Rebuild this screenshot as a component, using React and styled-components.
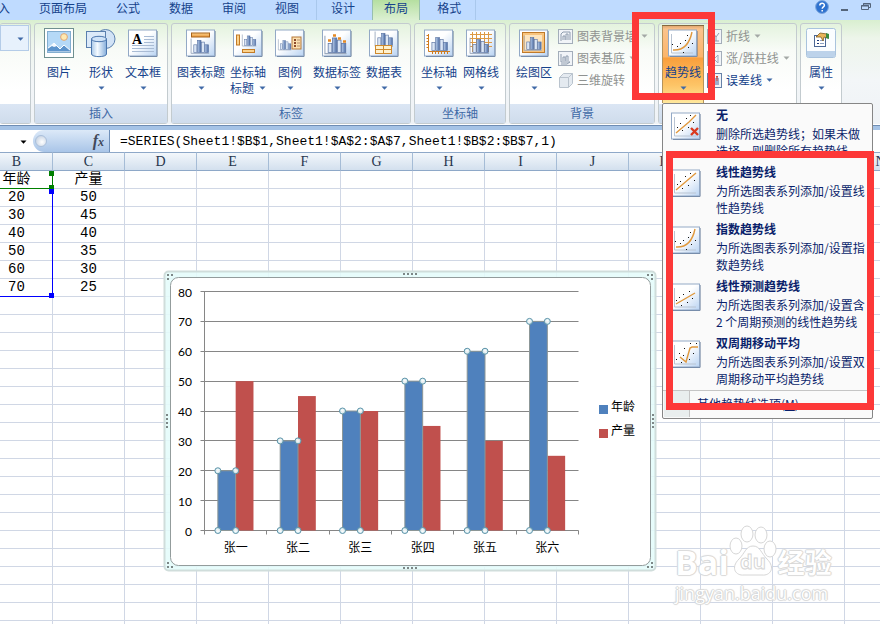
import { useState } from 'react';
import styled, { createGlobalStyle, css } from 'styled-components';

const GlobalStyle = createGlobalStyle`
  * { box-sizing: border-box; }
  body {
    margin: 0;
    font-family: "Noto Sans CJK SC", sans-serif;
    font-size: 12px;
    color: #15428b;
    overflow: hidden;
  }
  button, input { font: inherit; color: inherit; border: 0; padding: 0; background: none; }
`;

const uiFont = '"Noto Sans CJK SC", sans-serif';
const cellFont = '"Liberation Mono", "Noto Sans CJK SC", monospace';

//layout of the window
const Page = styled.main`
  position: relative;
  display: flex;
  flex-direction: column;
  height: 100vh;
  overflow: hidden;
  background: #fff;
`;

const TabBar = styled.nav`
  display: flex;
  height: 20px;
  background: #bfdbff;
`;

const TabList = styled.div`
  display: flex;
  gap: 1px;
  margin-left: -28px;
`;

const ContextTabs = styled.div`
  display: flex;
  gap: 1px;
  margin-left: 3px;
  border-left: 1px solid #a9c8ec;
  border-right: 1px solid #a9c8ec;
`;

const Tab = styled.button`
  height: 20px;
  padding: 0 14px 4px;
  line-height: 16px;
  white-space: nowrap;
  ${(props) => props.$active && css`
    margin: 0 3px;
    padding: 0 11px 4px;
    background: linear-gradient(#b5dfa0, #dcf0d2);
    box-shadow: -1px 0 #98bfae, 1px 0 #98bfae;
  `}
`;

const WindowButtons = styled.div`
  display: flex;
  align-items: flex-start;
  gap: 12px;
  margin-left: auto;
  padding-right: 9px;
`;

const IconButton = styled.button`
  height: 15px;
  line-height: 0;
`;

const Ribbon = styled.section`
  position: relative;
  z-index: 2;
  display: grid;
  grid-template-columns: 31px 134px 240px 92px 146px 139px 42px;
  gap: 3px;
  height: 110px;
  padding: 3px 0 6px;
  background: linear-gradient(#d9efd0, #edf5ea 18px, #f3f6f8 60px, #eef2f6);
  border-bottom: 4px solid #a5c3e6;
  box-shadow: inset 0 -1px #6e8db4, inset 0 -2px #fff;
`;

const Group = styled.section`
  display: flex;
  flex-direction: column;
  justify-content: space-between;
  height: 101px;
  border: 1px solid #c3cbcf;
  border-left-width: ${(props) => (props.$cut ? 0 : '1px')};
  border-radius: 3px;
  background: linear-gradient(#e4f3de, #f8fbf7 26px, #fff 66px);
`;

const GroupTools = styled.div`
  display: flex;
  height: 79px;
  padding: 1px 3px 0;
`;

const GroupTitle = styled.h2`
  height: 19px;
  margin: 0;
  font-size: 12px;
  font-weight: 400;
  line-height: 18px;
  text-align: center;
  color: #3f69a6;
  background: linear-gradient(#dbe6f4, #cfdcec);
`;

const StyleBox = styled.button`
  width: 30px;
  height: 26px;
  padding: 0 4px 0 16px;
  margin-left: -3px;
  line-height: 0;
  border: 1px solid #b4cce8;
  background: #e7f1fc;
`;

const BigTool = styled.button`
  display: flex;
  flex: none;
  flex-direction: column;
  align-items: center;
  width: ${(props) => props.$width || 42}px;
  height: 78px;
  padding-top: 3px;
  line-height: 16px;
  white-space: nowrap;
  ${(props) => props.$pressed && css`
    background: linear-gradient(#d9a06a, #fbc38c 4px, #fbb56a 32px, #fa9f3c 33px, #fdc466 60px, #ffe79c);
    box-shadow: inset 0 1px #85693f, inset 1px 0 #b5935c, inset -1px 0 #b5935c;
  `}
  & > svg { margin-bottom: 6px; flex: none; }
`;

const ToolLine = styled.span`
  display: flex;
  align-items: center;
  justify-content: center;
  gap: 5px;
  height: 16px;
`;

const SmallTools = styled.div`
  display: flex;
  flex-direction: column;
  padding-left: 3px;
`;

const SmallTool = styled.button`
  display: flex;
  align-items: center;
  gap: 4px;
  height: 22px;
  line-height: 16px;
  white-space: nowrap;
  color: ${(props) => (props.disabled ? '#8f9290' : '#15428b')};
`;

//trendline menu
const MenuAnchor = styled.div`
  position: relative;
`;

const Menu = styled.div`
  position: absolute;
  top: 78px;
  left: 0;
  width: 211px;
  border: 1px solid #868686;
  border-radius: 2px;
  background: #fafafa;
  color: #0a1f6b;
`;

const MenuItem = styled.button`
  display: grid;
  grid-template-columns: 30px 152px;
  column-gap: 15px;
  width: 100%;
  height: 57px;
  padding: 1px 4px 2px 8px;
  text-align: left;
  & > svg { margin-top: 6px; }
`;

const MenuName = styled.strong`
  display: block;
  line-height: 20px;
`;

const MenuText = styled.span`
  display: block;
  line-height: 17px;
`;

const MenuFooter = styled.button`
  display: flex;
  width: 100%;
  height: 28px;
  margin-top: 1px;
  padding: 0 1px 1px;
  border-top: 1px solid #c5c5c5;
  line-height: 26px;
  text-align: left;
  &::before {
    content: '';
    width: 25px;
    margin-right: 7px;
    background: #e9eeee;
    border-right: 1px solid #c5c5c5;
  }
`;

//formula bar
const FormulaBar = styled.div`
  display: grid;
  grid-template-columns: 33px 77px 1fr;
  height: 22px;
  background: #fff;
`;

const NameBox = styled.button`
  padding-right: 6px;
  text-align: right;
  line-height: 0;
`;

const FunctionButton = styled.button`
  display: flex;
  align-items: center;
  justify-content: space-between;
  padding: 0 5px 0 2px;
  border-radius: 11px 0 0 11px;
  border-right: 1px solid #6f8fb8;
  background: linear-gradient(#dce9f8, #a9c5e8);
  font: italic bold 16px "Liberation Serif", serif;
  color: #40485a;
  small { font-size: 12px; }
`;

const Knob = styled.span`
  width: 12px;
  height: 12px;
  border-radius: 50%;
  background: radial-gradient(circle at 60% 60%, #fff, #b9c8dc);
  border: 1px solid #aabfda;
`;

const FormulaInput = styled.input`
  min-width: 0;
  padding-left: 10px;
  font: 13px ${cellFont};
  color: #000;
  outline: none;
`;

//sheet
const Sheet = styled.section`
  position: relative;
  flex: 1;
  min-height: 0;
  overflow: hidden;
`;

const Cells = styled.table`
  table-layout: fixed;
  width: 936px;
  margin-left: -19px;
  border-collapse: separate;
  border-spacing: 0;
  font: 14px ${cellFont};
  color: #000;
`;

const HeadCell = styled.th`
  height: 19px;
  padding: 0;
  border: solid #8ea8c8;
  border-width: 1px 1px 1px 0;
  border-right-color: #a5bcd6;
  background: linear-gradient(#f3f7fb, #d3e0ee);
  font: 14px/16px "Liberation Serif", serif;
  color: #27364d;
`;

const Cell = styled.td`
  height: 18px;
  padding: 0;
  border: solid #d0d7e5;
  border-width: 0 1px 1px 0;
  line-height: 17px;
  text-align: center;
`;

const Range = styled.div`
  position: absolute;
  top: ${(props) => props.$top}px;
  left: -20px;
  width: 73px;
  height: ${(props) => props.$height}px;
  border: solid ${(props) => props.$color};
  border-width: 0 1px 1px 0;
  &::before, &::after {
    content: '';
    position: absolute;
    right: -2px;
    width: 5px;
    height: 5px;
    background: ${(props) => props.$color};
  }
  &::before { top: 0; }
  &::after { bottom: -2px; }
`;

const ChartObject = styled.figure`
  position: absolute;
  top: 118px;
  left: 163px;
  margin: 0;
  line-height: 0;
`;

const Highlight = styled.div`
  position: absolute;
  z-index: 3;
  top: ${(props) => props.$top}px;
  left: ${(props) => props.$left}px;
  width: ${(props) => props.$width}px;
  height: ${(props) => props.$height}px;
  border: 7px solid #fd3838;
  pointer-events: none;
`;

const Watermark = styled.div`
  position: absolute;
  left: 675px;
  top: 375px;
  color: #fff;
  font-family: "Open Sans", "Noto Sans CJK SC", sans-serif;
  text-shadow: 0 0 1px #bbb, 1px 0 1px #ddd, -1px 0 1px #ddd, 0 1px 1px #ddd, 0 -1px 1px #ddd;
`;

const WatermarkLogo = styled.div`
  display: flex;
  align-items: flex-end;
  height: 54px;
  font-size: 34px;
  font-weight: 700;
  line-height: 38px;
  svg { flex: none; margin-bottom: 4px; text-shadow: none; }
`;

const WatermarkName = styled.span`
  margin-left: 1px;
  font: 700 27px/38px ${uiFont};
`;

const WatermarkSite = styled.div`
  font-size: 18px;
  line-height: 24px;
`;

//small drawings
const Arrow = ({ color = '#3f69a6' }) => (
    <svg width="7" height="4" viewBox="0 0 7 4"><path d="M0.5 0.5h6L3.5 3.7z" fill={color} /></svg>
);

const Defs = () => (
    <svg width="0" height="0" style={{ position: 'absolute' }}>
        <defs>
            <linearGradient id="paper" x1="0" y1="0" x2="1" y2="1">
                <stop offset="0.45" stopColor="#fff" />
                <stop offset="1" stopColor="#b9d3f2" />
            </linearGradient>
            <linearGradient id="bar" x1="0" x2="1">
                <stop offset="0" stopColor="#b9cdea" />
                <stop offset="1" stopColor="#4a6ba4" />
            </linearGradient>
            <linearGradient id="can" x1="0" x2="1">
                <stop offset="0" stopColor="#a9c8e8" />
                <stop offset="0.4" stopColor="#f4faff" />
                <stop offset="1" stopColor="#86aedb" />
            </linearGradient>
            <linearGradient id="gold" x1="0" y1="0" x2="0" y2="1">
                <stop offset="0" stopColor="#fbd28c" />
                <stop offset="1" stopColor="#e9963a" />
            </linearGradient>
            <radialGradient id="handle">
                <stop offset="0.2" stopColor="#fff" stopOpacity="0.9" />
                <stop offset="1" stopColor="#c8e6ee" stopOpacity="0.9" />
            </radialGradient>
        </defs>
    </svg>
);

const Paper = ({ children }) => (
    <svg width="30" height="30" viewBox="0 0 30 30">
        <path d="M2 28.5h27V3" fill="none" stroke="#5b7090" />
        <rect x="0.5" y="2" width="28" height="26" fill="url(#paper)" stroke="#93a9c6" />
        {children}
    </svg>
);

//bars with an axis, shared by most of the chart icons
const Bars = ({ x = 6, y = 23, s = 1, axis = true }) => (
    <g transform={`translate(${x} ${y}) scale(${s})`} stroke="#5b74a3" strokeWidth="0.7">
        {axis && <path d="M-1-15V1.5H19" fill="none" stroke="#9aa8bd" strokeWidth="1" />}
        <rect x="2" y="-8" width="3.4" height="8.5" fill="#dbe6f5" />
        <rect x="6" y="-13" width="4" height="13.5" fill="url(#bar)" />
        <rect x="10.5" y="-11" width="3.4" height="11.5" fill="#dbe6f5" />
        <rect x="14.3" y="-8" width="4" height="8.5" fill="url(#bar)" />
    </g>
);

const PictureIcon = () => (
    <svg width="30" height="30" viewBox="0 0 30 30">
        <rect x="0.5" y="0.5" width="29" height="29" fill="#fff" stroke="#6f9090" />
        <rect x="3" y="3" width="24" height="21" fill="#b5d9f7" />
        <circle cx="20" cy="9" r="3.4" fill="#ffe9b0" stroke="#dca77a" />
        <path d="M3 24v-3l7-6 6 6 4-4 7 6v1z" fill="#5d94cc" stroke="#fff" />
        <path d="M3 21l7-6 3 3-3 1-2-1z" fill="#f5faff" />
        <rect x="3.5" y="3.5" width="23" height="21" fill="none" stroke="#83aed0" />
    </svg>
);

const ShapesIcon = () => (
    <svg width="30" height="30" viewBox="0 0 30 30">
        <circle cx="19.5" cy="11" r="9.5" fill="#d2e3f6" stroke="#5a7fae" />
        <rect x="0.5" y="3.5" width="19" height="16" fill="#dceaf9" stroke="#5a7fae" />
        <path d="M5.5 11v15c0 3.5 15 3.5 15 0V11z" fill="url(#can)" stroke="#4b76ad" />
        <ellipse cx="13" cy="11" rx="7.5" ry="2.7" fill="#cfe3f8" stroke="#4b76ad" />
    </svg>
);

const TextBoxIcon = () => (
    <Paper>
        <path d="M16 8.5h10M16 11.5h10M16 14.5h10M4 17.500h22M4 20.500h22M4 23.500h22" stroke="#a9bbd4" />
        <text x="4" y="16" fontFamily="Liberation Serif" fontWeight="700" fontSize="14" fill="#000">A</text>
    </Paper>
);

const TitleIcon = () => (
    <Paper>
        <rect x="5.5" y="5" width="18" height="4" fill="url(#gold)" stroke="#a8631a" />
        <Bars x={6} y={24} s={0.9} />
    </Paper>
);

const AxisTitleIcon = () => (
    <Paper>
        <rect x="3.5" y="7" width="3" height="10" fill="#fbd28c" stroke="#c37b25" />
        <Bars x={10} y={17} s={0.7} />
        <rect x="9.5" y="21.5" width="12" height="3" fill="#fbd28c" stroke="#c37b25" />
    </Paper>
);

const LegendIcon = () => (
    <Paper>
        <Bars x={4} y={21} s={0.65} />
        <rect x="17" y="9" width="9" height="12" fill="#fce0b0" stroke="#b6793a" />
        <path d="M19 12h2M19 15h2M19 18h2" stroke="#8c4a2b" strokeWidth="2" />
        <path d="M22 12h3M22 15h3M22 18h3" stroke="#b58d6a" />
    </Paper>
);

const DataLabelIcon = () => (
    <Paper>
        <Bars x={4} y={24} s={1.08} />
        <path d="M6 12.5h3M11 7.5h3M16 10.5h3M21 13.5h3" stroke="#e58a25" strokeWidth="2.5" />
    </Paper>
);

const DataTableIcon = () => (
    <Paper>
        <Bars x={7} y={17} s={0.9} />
        <rect x="6.5" y="17.5" width="16" height="8" fill="#fff2cf" stroke="#cf8a2d" />
        <path d="M6 21.5h17M14.5 17v9" stroke="#cf8a2d" />
    </Paper>
);

const AxesIcon = () => (
    <Paper>
        <Bars x={6} y={22} s={0.95} axis={false} />
        <path d="M4.5 6v17.5H26M2.5 7.5h2M2.5 10.5h2M2.5 13.5h2M2.5 16.5h2M2.5 19.5h2M8.5 23v3M11.5 23v3M14.5 23v3M17.5 23v3M20.5 23v3M23.5 23v3" fill="none" stroke="#d07c1e" />
    </Paper>
);

const GridIcon = () => (
    <Paper>
        <path d="M4 6.5h22M4 10.5h22M4 14.5h22M4 18.5h22M6.5 4v20M10.5 4v20M14.5 4v20M18.5 4v20M22.5 4v20" stroke="#dd9a45" />
        <Bars x={5} y={24} s={0.95} />
    </Paper>
);

const PlotAreaIcon = () => (
    <Paper>
        <rect x="3.5" y="4.5" width="22" height="20" fill="#f8c47e" stroke="#c07a2a" />
        <rect x="6" y="7" width="17" height="15" fill="#fde5c0" />
        <Bars x={6} y={21} s={0.88} />
    </Paper>
);

const PropertiesIcon = () => (
    <svg width="30" height="30" viewBox="0 0 30 30">
        <rect x="0.5" y="0.5" width="29" height="29" rx="2" fill="#fafdff" stroke="#a9c3dd" />
        <path d="M1 23h28v5a1 1 0 0 1-1 1H2a1 1 0 0 1-1-1z" fill="#bdd3ea" />
        <rect x="8.5" y="7.5" width="11" height="11" fill="#fff" stroke="#4a6796" />
        <path d="M11 12.5h2M11 15.5h2" stroke="#1d3b78" />
        <path d="M14 12.5h4M14 15.5h4" stroke="#8ba0c2" />
        <path d="M10 9l4-4 7 1 1 4-4-1-1 4-2-4z" fill="#e9b45a" stroke="#7d5a22" strokeWidth="0.8" />
        <path d="M20 5l3 1v5l-3-1z" fill="#3b8a3f" />
    </svg>
);

const trendPaths = {
    none: 'M5 22L18 11l7-7',
    linear: 'M5 22L25 5',
    exponential: 'M5 22Q20 23 24 4',
    forecast: 'M5 22L24 11',
    moving: 'M9 18l6 5 4-14 2-1h6',
};

const trendDots = {
    none: [[6, 16], [9, 12], [11, 19], [15, 7], [17, 16], [22, 11], [19, 4]],
    linear: [[6, 16], [9, 13], [11, 20], [14, 8], [17, 17], [19, 5], [23, 12]],
    exponential: [[4, 16], [9, 18], [12, 15], [15, 24], [20, 19], [17, 12], [24, 15], [19, 7]],
    forecast: [[5, 18], [8, 15], [10, 23], [12, 12], [16, 20], [18, 9], [21, 16]],
    moving: [[5, 20], [8, 14], [10, 23], [12, 16], [13, 9], [18, 20], [22, 14], [19, 4], [25, 4]],
};

const TrendIcon = ({ kind }) => (
    <Paper>
        <path d="M3.5 6v19H25" fill="none" stroke="#b9c4d2" />
        <path d={trendPaths[kind]} fill="none" stroke="#e0983c" strokeWidth="1.4" />
        {trendDots[kind].map(([x, y]) => <rect key={`${x}-${y}`} x={x} y={y} width="1" height="1" fill="#111" />)}
        {kind === 'none' && <path d="M20 17l7 7M27 17l-7 7" stroke="#da3a20" strokeWidth="2.4" />}
    </Paper>
);

const SmallIcon = ({ kind }) => (
    <svg width="15" height="15" viewBox="0 0 15 15">
        {kind === 'rotate' ? (
            <g fill="#e4eaf0" stroke="#b9c3cd">
                <path d="M1.5 4.5l4-4h9v10l-4 4h-9z" />
                <path d="M1.5 4.5h9v10M10.5 4.5l4-4" fill="none" />
            </g>
        ) : (
            <>
                <rect x="0.5" y="0.5" width="14" height="14" fill="#f1f4f8" stroke={kind === 'error' ? '#6782a8' : '#a3adba'} />
                {kind === 'wall' && <path d="M3 12V5l2-2h7v8M5 11V7h2v4M8 11V5h2v6" fill="none" stroke="#8e9cae" />}
                {kind === 'floor' && <path d="M3 3v8h9l-3 2H3M5 10V6h2v4M8 10V5h2v5" fill="none" stroke="#8e9cae" />}
                {kind === 'lines' && <path d="M3 3v9h9M5 9l2-4 2 3 3-4M9 8v4" fill="none" stroke="#8e9cae" />}
                {kind === 'updown' && <path d="M3 12V4l4 4 4-4v8L7 8z" fill="none" stroke="#9dabc0" />}
                {kind === 'error' && <path d="M5 12V7h2v5M9 12V5h2v7" fill="none" stroke="#4c67a0" />}
                {kind === 'error' && <path d="M6 3v5M10 3v5M5 3.5h2M9 3.5h2" stroke="#d24a30" />}
            </>
        )}
    </svg>
);

const Tool = ({ icon, label, second, arrow = true, width, pressed, onClick }) => (
    <BigTool $width={width} $pressed={pressed} onClick={onClick}>
        {icon}
        <ToolLine>{label}</ToolLine>
        <ToolLine>{second}{arrow && <Arrow />}</ToolLine>
    </BigTool>
);

const Small = ({ kind, label, arrow = true, disabled }) => (
    <SmallTool disabled={disabled}>
        <SmallIcon kind={kind} />
        {label}
        {arrow && <Arrow color={disabled ? '#a3a8a5' : '#3f69a6'} />}
    </SmallTool>
);

const trendOptions = [
    { kind: 'none', name: '无', text: '删除所选趋势线；如果未做选择，则删除所有趋势线' },
    { kind: 'linear', name: '线性趋势线', text: '为所选图表系列添加/设置线性趋势线' },
    { kind: 'exponential', name: '指数趋势线', text: '为所选图表系列添加/设置指数趋势线' },
    { kind: 'forecast', name: '线性预测趋势线', text: '为所选图表系列添加/设置含 2 个周期预测的线性趋势线' },
    { kind: 'moving', name: '双周期移动平均', text: '为所选图表系列添加/设置双周期移动平均趋势线' },
];

const people = ['张一', '张二', '张三', '张四', '张五', '张六'];
const ages = [20, 30, 40, 50, 60, 70];
const yields = [50, 45, 40, 35, 30, 25];
const columns = 'BCDEFGHIJKLMN'.split('');

const cellValue = (row, col) => {
    if (col > 1) return '';
    if (row === 0) return ['年龄', '产量'][col];
    return [ages, yields][col][row - 1];
};

//plot area of the chart, value 0 lies on the base line
const plot = { left: 41.5, right: 415.5, top: 21.5, base: 260.5 };
const step = (plot.right - plot.left) / 6;
const barWidth = step / 3.5;
const valueY = (v) => plot.base - (v * (plot.base - plot.top)) / 80;

const Dots = ({ x, y, dx = 0, dy = 0, count = 4 }) => (
    Array.from({ length: count }, (_, i) => (
        <rect key={i} x={x + i * dx} y={y + i * dy} width="2" height="2" fill="#7d8787" />
    ))
);

const Chart = () => (
    <svg width="494" height="302" viewBox="0 0 494 302" role="img" aria-label="年龄 产量">
        <rect x="1.5" y="1.5" width="491" height="299" rx="4" fill="#e4fcfb" fillOpacity="0.88" stroke="#d0dddb" strokeWidth="2" />
        <rect x="7.5" y="7.5" width="480" height="288" rx="8" fill="#fff" stroke="#939c9c" />
        <Dots x={240} y={3} dx={4} />
        <Dots x={240} y={297} dx={4} />
        <Dots x={3} y={144} dy={4} />
        <Dots x={489} y={144} dy={4} />
        {[[4, 4], [8, 4], [4, 8], [484, 4], [488, 4], [488, 8], [4, 292], [4, 296], [8, 296], [488, 292], [484, 296], [488, 296]].map(([x, y]) => (
            <rect key={`${x}-${y}`} x={x} y={y} width="2" height="2" fill="#7d8787" />
        ))}
        {[0, 10, 20, 30, 40, 50, 60, 70, 80].map((v) => (
            <g key={v}>
                <path d={`M${plot.left - 4} ${Math.floor(valueY(v)) + 0.5}H${plot.right}`} stroke="#868686" />
                <text x="29" y={valueY(v) + 5} textAnchor="end" fontFamily="Lato" fontSize="12" fill="#000">{v}</text>
            </g>
        ))}
        <path d={`M${plot.left} ${plot.top}V${plot.base + 4}`} stroke="#868686" />
        {people.map((name, i) => {
            const x = plot.left + step * i + barWidth * 0.75;
            return (
                <g key={name}>
                    <path d={`M${Math.floor(plot.left + step * (i + 1)) + 0.5} ${plot.base}v4`} stroke="#868686" />
                    <rect x={x + barWidth} y={valueY(yields[i])} width={barWidth} height={plot.base - valueY(yields[i])} fill="#c0504d" />
                    <rect x={x} y={valueY(ages[i])} width={barWidth} height={plot.base - valueY(ages[i])} fill="#4f81bd" stroke="#8c9696" />
                    {[[x, valueY(ages[i])], [x + barWidth, valueY(ages[i])], [x, plot.base], [x + barWidth, plot.base]].map(([cx, cy], n) => (
                        <circle key={n} cx={cx} cy={cy} r="3" fill="url(#handle)" stroke="#5d93a8" />
                    ))}
                    <text x={plot.left + step * (i + 0.5)} y="282" textAnchor="middle" fontFamily={uiFont} fontSize="12" fill="#000">{name}</text>
                </g>
            );
        })}
        <rect x="436" y="135" width="9" height="9" fill="#4f81bd" />
        <text x="448" y="141" fontFamily={uiFont} fontSize="12" fill="#000">年龄</text>
        <rect x="436" y="159" width="9" height="9" fill="#c0504d" />
        <text x="448" y="165" fontFamily={uiFont} fontSize="12" fill="#000">产量</text>
    </svg>
);

const PawLogo = () => (
    <svg width="48" height="52" viewBox="0 0 48 52" fill="#fff" stroke="#d6d6d6">
        <ellipse cx="7" cy="21" rx="6" ry="8" />
        <ellipse cx="18" cy="9" rx="6" ry="8" />
        <ellipse cx="32" cy="10" rx="6" ry="8" />
        <ellipse cx="41" cy="24" rx="6" ry="8" />
        <path d="M24 21c-7 0-8 7-14 13-9 9-3 17 5 16h18c8 1 14-7 5-16-6-6-7-13-14-13z" />
        <text x="24" y="44" textAnchor="middle" fontFamily="Open Sans" fontWeight="700" fontSize="20">du</text>
    </svg>
);

const App = () => {
    const [tab, setTab] = useState('布局');
    const [menuOpen, setMenuOpen] = useState(true);
    const [formula, setFormula] = useState('=SERIES(Sheet1!$B$1,Sheet1!$A$2:$A$7,Sheet1!$B$2:$B$7,1)');

    const renderTab = (name) => (
        <Tab key={name} $active={tab === name} onClick={() => setTab(name)}>{name}</Tab>
    );

    return (
        <Page>
            <GlobalStyle />
            <Defs />
            <TabBar>
                <TabList>{['插入', '页面布局', '公式', '数据', '审阅', '视图'].map(renderTab)}</TabList>
                <ContextTabs>{['设计', '布局', '格式'].map(renderTab)}</ContextTabs>
                <WindowButtons>
                    <IconButton aria-label="帮助">
                        <svg width="14" height="15" viewBox="0 0 14 15">
                            <circle cx="7" cy="7" r="6.4" fill="#2f72cf" stroke="#7ba5dc" />
                            <path d="M4.8 5.5c0-3 4.6-3 4.6-.2 0 1.7-2.2 1.6-2.2 3.5M7.2 10v1.6" fill="none" stroke="#fff" strokeWidth="1.5" />
                        </svg>
                    </IconButton>
                    <IconButton aria-label="最小化">
                        <svg width="8" height="15" viewBox="0 0 8 15"><path d="M0 10h7" stroke="#55657a" strokeWidth="2" /></svg>
                    </IconButton>
                    <IconButton aria-label="还原">
                        <svg width="10" height="15" viewBox="0 0 10 15"><path d="M2.5 5V3.5h7v4H8M0.5 5.5h7v4h-7zM2 4h7M0 6h8" fill="none" stroke="#55657a" /></svg>
                    </IconButton>
                </WindowButtons>
            </TabBar>
            <Ribbon>
                <Group $cut>
                    <GroupTools><StyleBox aria-label="图表元素"><Arrow /></StyleBox></GroupTools>
                    <GroupTitle />
                </Group>
                <Group>
                    <GroupTools>
                        <Tool icon={<PictureIcon />} label="图片" arrow={false} />
                        <Tool icon={<ShapesIcon />} label="形状" />
                        <Tool icon={<TextBoxIcon />} label="文本框" />
                    </GroupTools>
                    <GroupTitle>插入</GroupTitle>
                </Group>
                <Group>
                    <GroupTools>
                        <Tool icon={<TitleIcon />} label="图表标题" width={52} />
                        <Tool icon={<AxisTitleIcon />} label="坐标轴" second="标题" />
                        <Tool icon={<LegendIcon />} label="图例" />
                        <Tool icon={<DataLabelIcon />} label="数据标签" width={52} />
                        <Tool icon={<DataTableIcon />} label="数据表" />
                    </GroupTools>
                    <GroupTitle>标签</GroupTitle>
                </Group>
                <Group>
                    <GroupTools>
                        <Tool icon={<AxesIcon />} label="坐标轴" />
                        <Tool icon={<GridIcon />} label="网格线" />
                    </GroupTools>
                    <GroupTitle>坐标轴</GroupTitle>
                </Group>
                <Group>
                    <GroupTools>
                        <Tool icon={<PlotAreaIcon />} label="绘图区" />
                        <SmallTools>
                            <Small kind="wall" label="图表背景墙" disabled />
                            <Small kind="floor" label="图表基底" disabled />
                            <Small kind="rotate" label="三维旋转" arrow={false} disabled />
                        </SmallTools>
                    </GroupTools>
                    <GroupTitle>背景</GroupTitle>
                </Group>
                <Group>
                    <GroupTools>
                        <MenuAnchor>
                            <Tool icon={<TrendIcon kind="exponential" />} label="趋势线" pressed onClick={() => setMenuOpen(!menuOpen)} />
                            {menuOpen && (
                                <Menu>
                                    {trendOptions.map((option) => (
                                        <MenuItem key={option.kind}>
                                            <TrendIcon kind={option.kind} />
                                            <span>
                                                <MenuName>{option.name}</MenuName>
                                                <MenuText>{option.text}</MenuText>
                                            </span>
                                        </MenuItem>
                                    ))}
                                    <MenuFooter>其他趋势线选项(<u>M</u>)</MenuFooter>
                                </Menu>
                            )}
                        </MenuAnchor>
                        <SmallTools>
                            <Small kind="lines" label="折线" disabled />
                            <Small kind="updown" label="涨/跌柱线" disabled />
                            <Small kind="error" label="误差线" />
                        </SmallTools>
                    </GroupTools>
                    <GroupTitle />
                </Group>
                <Group>
                    <GroupTools><Tool icon={<PropertiesIcon />} label="属性" width={34} /></GroupTools>
                    <GroupTitle />
                </Group>
            </Ribbon>
            <FormulaBar>
                <NameBox aria-label="名称框"><Arrow color="#000" /></NameBox>
                <FunctionButton aria-label="插入函数"><Knob /><span>f<small>x</small></span></FunctionButton>
                <FormulaInput aria-label="编辑栏" value={formula} onChange={(event) => setFormula(event.target.value)} />
            </FormulaBar>
            <Sheet>
                <Cells>
                    <thead>
                        <tr>{columns.map((name) => <HeadCell key={name}>{name}</HeadCell>)}</tr>
                    </thead>
                    <tbody>
                        {Array.from({ length: 26 }, (_, row) => (
                            <tr key={row}>
                                {columns.map((name, col) => <Cell key={name}>{row < 7 ? cellValue(row, col) : ''}</Cell>)}
                            </tr>
                        ))}
                    </tbody>
                </Cells>
                <Range $top={19} $height={18} $color="#008000" />
                <Range $top={37} $height={108} $color="#0000ff" />
                <ChartObject><Chart /></ChartObject>
                <Watermark>
                    <WatermarkLogo>Bai<PawLogo /><WatermarkName>经验</WatermarkName></WatermarkLogo>
                    <WatermarkSite>jingyan.baidu.com</WatermarkSite>
                </Watermark>
            </Sheet>
            <Highlight $top={12} $left={632} $width={83} $height={88} />
            <Highlight $top={151} $left={666} $width={208} $height={259} />
        </Page>
    );
};

export default App;
